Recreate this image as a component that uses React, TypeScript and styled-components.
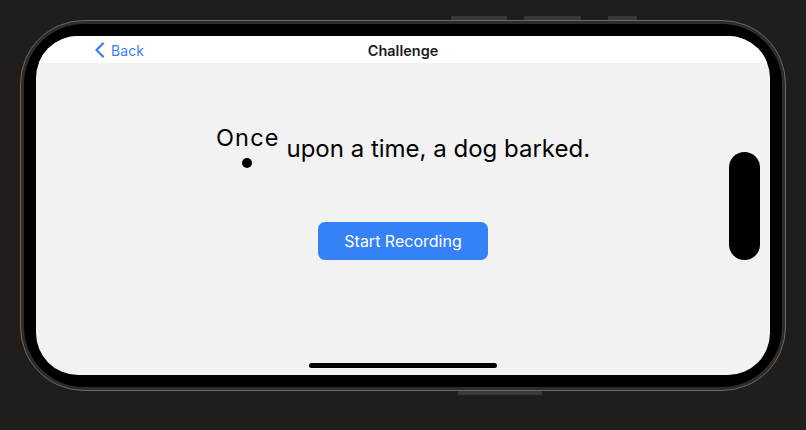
import React from "react"
import styled, { createGlobalStyle } from "styled-components"

const GlobalStyle = createGlobalStyle`
  html, body {
    margin: 0;
    padding: 0;
    background: #211d1b;
    font-family: Inter, "Noto Sans", "Liberation Sans", sans-serif;
    -webkit-font-smoothing: antialiased;
  }
`

const Page = styled.div`
  width: 806px;
  height: 430px;
  padding: 20px 0 0 20px;
  box-sizing: border-box;
  background: #211d1b;
  overflow: hidden;
`

const Phone = styled.div`
  position: relative;
  width: 766px;
  height: 371px;
  box-sizing: border-box;
  border: 1px solid #6b6968;
  border-radius: 64px;
  background: #2e2c2b;
  padding: 3px;
`

// hardware buttons sticking out of the frame edge
const ButtonRail = styled.div<{ $bottom?: boolean }>`
  position: absolute;
  left: 0;
  right: 0;
  display: flex;
  gap: 17px;
  padding-left: ${({ $bottom }) => ($bottom ? 437 : 430)}px;
  ${({ $bottom }) => ($bottom ? "bottom: -5px;" : "top: -5px;")}
`

const SideButton = styled.div<{ $width: number; $gap?: number }>`
  width: ${({ $width }) => $width}px;
  height: 4px;
  margin-left: ${({ $gap = 0 }) => $gap}px;
  background: #3b3938;
  border-radius: 1px;
`

const Bezel = styled.div`
  height: 100%;
  box-sizing: border-box;
  border-radius: 60px;
  background: #000;
  padding: 12px;
`

const Screen = styled.div`
  position: relative;
  width: 734px;
  height: 339px;
  border-radius: 42px;
  overflow: hidden;
  background: #f2f2f2;
  display: flex;
  flex-direction: column;
`

const NavBar = styled.div`
  height: 27px;
  flex: none;
  background: #ffffff;
  display: grid;
  grid-template-columns: 1fr auto 1fr;
  align-items: center;
  padding: 0 58px;
`

const BackButton = styled.button`
  justify-self: start;
  display: flex;
  align-items: center;
  gap: 6px;
  border: 0;
  background: none;
  padding: 0;
  margin-top: 1px;
  color: #3a7ff1;
  font-family: inherit;
  font-size: 14px;
  letter-spacing: 0.1px;
  cursor: pointer;
`

const Title = styled.div`
  font-size: 14.5px;
  font-weight: 600;
  color: #1c1c1e;
  margin-top: 1px;
`

const Content = styled.div`
  flex: 1;
  display: flex;
  flex-direction: column;
  align-items: center;
  padding-top: 60px;
`

const Sentence = styled.div`
  font-size: 24px;
  line-height: 30px;
  color: #000;
  white-space: nowrap;
`

const Word = styled.span<{ $active?: boolean }>`
  position: relative;
  ${({ $active }) =>
    $active &&
    `
    vertical-align: 11px;
    font-size: 23.5px;
    letter-spacing: 1.2px;
    &::after {
      content: "";
      position: absolute;
      left: 50%;
      top: 100%;
      margin: 6px 0 0 -5.5px;
      width: 10px;
      height: 10px;
      border-radius: 50%;
      background: #000;
    }
  `}
`

const RecordButton = styled.button`
  margin-top: 58px;
  width: 170px;
  height: 38px;
  border: 0;
  border-radius: 7px;
  background: #3581f6;
  color: #ffffff;
  font-family: inherit;
  font-size: 16px;
  cursor: pointer;
`

const Island = styled.div`
  position: absolute;
  right: 10px;
  top: 116px;
  width: 31px;
  height: 108px;
  border-radius: 16px;
  background: #000;
`

const HomeIndicator = styled.div`
  flex: none;
  align-self: center;
  margin-bottom: 7px;
  width: 188px;
  height: 5px;
  border-radius: 3px;
  background: #000;
`

const Chevron = () => (
  <svg width="11" height="16" viewBox="0 0 11 16" fill="none">
    <path d="M9 1.5 L2.5 8 L9 14.5" stroke="currentColor" strokeWidth="2.3" strokeLinecap="round" strokeLinejoin="round" />
  </svg>
)

const words = ["Once", "upon", "a", "time,", "a", "dog", "barked."]

export default function App() {
  return (
    <Page>
      <GlobalStyle />
      <Phone>
        <ButtonRail>
          <SideButton $width={56} />
          <SideButton $width={57} />
          <SideButton $width={29} $gap={10} />
        </ButtonRail>
        <ButtonRail $bottom>
          <SideButton $width={84} />
        </ButtonRail>
        <Bezel>
          <Screen>
            <NavBar>
              <BackButton>
                <Chevron />
                Back
              </BackButton>
              <Title>Challenge</Title>
              <span />
            </NavBar>
            <Content>
              <Sentence>
                {words.map((w, i) => (
                  <React.Fragment key={i}>
                    {i > 0 && " "}
                    <Word $active={i === 0}>{w}</Word>
                  </React.Fragment>
                ))}
              </Sentence>
              <RecordButton>Start Recording</RecordButton>
            </Content>
            <Island />
            <HomeIndicator />
          </Screen>
        </Bezel>
      </Phone>
    </Page>
  )
}
